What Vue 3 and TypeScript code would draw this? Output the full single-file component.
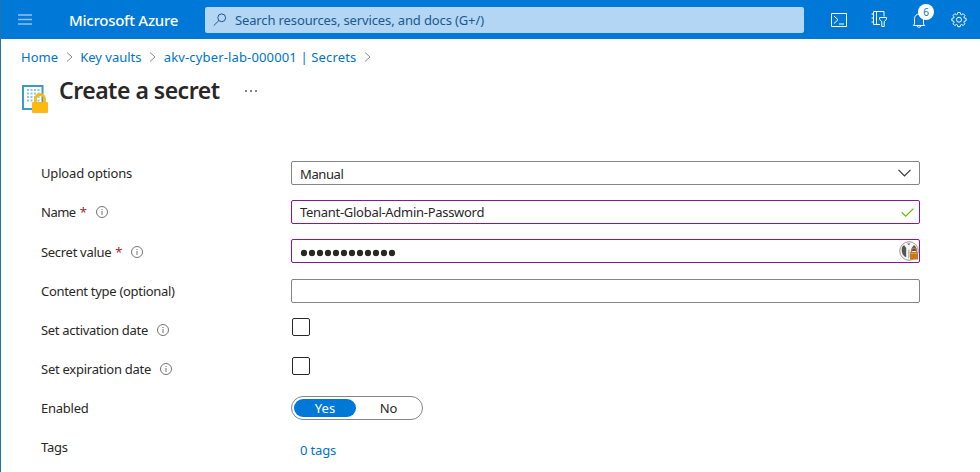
<script setup lang="ts">
import { ref } from 'vue'

interface Row {
  id: string
  label: string
  kind: 'select' | 'text' | 'password' | 'empty' | 'check' | 'toggle' | 'tags'
  required?: boolean
  info?: boolean
}

const crumbs = ['Home', 'Key vaults', 'akv-cyber-lab-000001 | Secrets']
const rows: Row[] = [
  { id: 'upload', label: 'Upload options', kind: 'select' },
  { id: 'name', label: 'Name', kind: 'text', required: true, info: true },
  { id: 'value', label: 'Secret value', kind: 'password', required: true, info: true },
  { id: 'content', label: 'Content type (optional)', kind: 'empty' },
  { id: 'activation', label: 'Set activation date', kind: 'check', info: true },
  { id: 'expiration', label: 'Set expiration date', kind: 'check', info: true },
  { id: 'enabled', label: 'Enabled', kind: 'toggle' },
  { id: 'tags', label: 'Tags', kind: 'tags' },
]
const enabled = ref(true)
const dots = Array.from({ length: 12 }, (_, i) => i * 8 + 4)
const gridDots = [0, 1, 2, 3].flatMap((r) => [0, 1, 2, 3].map((c) => ({ x: 5 + c * 3.5, y: 5 + r * 3.5 })))
</script>

<template>
  <div class="portal">
    <header class="topbar">
      <svg class="menu" width="14" height="11" viewBox="0 0 14 11"><path d="M0 1h14M0 5.5h14M0 10h14" /></svg>
      <span class="brand">Microsoft Azure</span>
      <div class="search">
        <svg width="14" height="14" viewBox="0 0 14 14"><circle cx="8.7" cy="4.8" r="3.9" /><path d="M5.8 7.7L.8 12.5" /></svg>
        <span class="search-text">Search resources, services, and docs (G+/)</span>
      </div>
      <nav class="tools">
        <svg width="16" height="14" viewBox="0 0 16 14"><path d="M.5.5h15v13H.5zM3 3l4 3.7L3 10.5M8 11h5" /></svg>
        <svg class="filter" width="16" height="17" viewBox="0 0 16 17"><path d="M9 13.5H2.5v-13h10.5v5M5.5.5v13M.5 3h2M.5 7h2M.5 11h2M8.5 6.5h7v1.7l-2.3 2.6v4.7h-2.4v-4.7L8.5 8.2z" /></svg>
        <span class="bell">
          <svg width="14" height="16" viewBox="0 0 14 16"><path d="M2.5 12V6.5a4.5 4.5 0 0 1 9 0V12l1.2 1.5H1.3zM5 13.8c.3 2 3.7 2 4 0" /></svg>
          <b class="count">6</b>
        </span>
        <svg class="gear" width="16" height="16" viewBox="0 0 16 16">
          <path d="M6.8.5h2.4l.4 1.8 1 .4 1.6-1 1.7 1.7-1 1.6.4 1 1.8.4v2.4l-1.8.4-.4 1 1 1.6-1.7 1.7-1.6-1-1 .4-.4 1.8H6.8l-.4-1.8-1-.4-1.6 1-1.7-1.7 1-1.6-.4-1L.9 8.8V6.4L2.7 6l.4-1-1-1.6 1.7-1.7 1.6 1 1-.4z" /><circle cx="8" cy="7.7" r="2.5" />
        </svg>
      </nav>
    </header>

    <main class="blade">
      <nav class="crumbs">
        <template v-for="(crumb, i) in crumbs" :key="crumb">
          <a :class="'crumb crumb-' + i">{{ crumb }}</a>
          <svg class="sep" width="7" height="10" viewBox="0 0 7 10"><path d="M1 .5L6 5 1 9.5" /></svg>
        </template>
      </nav>

      <div class="heading">
        <svg width="28" height="29" viewBox="0 0 28 29">
          <path class="sheet" d="M1 2h19.5v23H1z" />
          <rect v-for="(d, i) in gridDots" :key="i" class="cell" :x="d.x" :y="d.y" width="2" height="2" />
          <path class="shackle" d="M13.5 19v-4a4.5 4.5 0 0 1 9 0v4" />
          <rect class="lock" x="10" y="18" width="16" height="11" rx="1" />
        </svg>
        <h1>Create a secret</h1>
        <span class="more"><i></i><i></i><i></i></span>
      </div>

      <form class="form" @submit.prevent>
        <div v-for="row in rows" :key="row.id" :class="['row', 'row-' + row.id]">
          <div class="label">
            <span class="label-text">{{ row.label }}</span>
            <span v-if="row.required" class="star">*</span>
            <svg v-if="row.info" class="info" width="12" height="12" viewBox="0 0 12 12"><circle cx="6" cy="6" r="5.5" /><path d="M6 5v4M6 3v1" /></svg>
          </div>

          <div v-if="row.kind === 'select'" class="field">
            <span class="manual">Manual</span>
            <svg class="chevron" width="13" height="8" viewBox="0 0 13 8"><path d="M.5.8l6 6 6-6" /></svg>
          </div>
          <div v-else-if="row.kind === 'text'" class="field valid">
            <span class="secret-name">Tenant-Global-Admin-Password</span>
            <svg class="tick" width="13" height="9" viewBox="0 0 13 9"><path d="M.7 4.2l4 3.9L12.4.6" /></svg>
          </div>
          <div v-else-if="row.kind === 'password'" class="field valid">
            <svg class="dots" width="96" height="8" viewBox="0 0 96 8"><ellipse v-for="x in dots" :key="x" :cx="x" cy="4" rx="3.1" ry="3.3" /></svg>
            <svg class="manager" width="20" height="20" viewBox="0 0 20 20">
              <circle class="ring" cx="10" cy="10" r="9.3" />
              <path class="dark" d="M3 6.2L5 4l2.2 3v9.3C4 15 2 12 3 6.2zM12.8 6.8L15 4C17.3 6 18 8 17.7 10h-4.9zM8.3 2.4h3L9.8 4.2z" />
              <path class="mid" d="M9 9.5l.8-1.5.8 1.5v6.5L9 18z" />
              <path class="clasp" d="M12.5 12V9.7a2.5 2.5 0 0 1 5 0V12" />
              <rect class="pad" x="11" y="11" width="8" height="7.5" rx=".6" />
              <path class="shine" d="M11.3 12.5h7.4" />
            </svg>
          </div>
          <div v-else-if="row.kind === 'empty'" class="field"></div>
          <span v-else-if="row.kind === 'check'" class="check"></span>
          <div v-else-if="row.kind === 'toggle'" class="toggle">
            <span :class="['option', { on: enabled }]" @click="enabled = true">Yes</span>
            <span :class="['option', { on: !enabled }]" @click="enabled = false">No</span>
          </div>
          <a v-else class="tags">0 tags</a>
        </div>
      </form>
    </main>
  </div>
</template>

<style>
body {
  background: #fff;
}
</style>

<style scoped>
* {
  box-sizing: border-box;
}
.portal {
  width: 980px;
  height: 472px;
  overflow: hidden;
  border-left: 1px solid #2273a8;
  background: #fff;
  color: #292827;
  font: 13px/18px 'Noto Sans', sans-serif;
  white-space: nowrap;
}
svg {
  display: block;
  flex: none;
  fill: none;
}
.topbar {
  display: flex;
  align-items: center;
  height: 39px;
  padding-left: 17px;
  background: #0078d7;
  color: #fff;
}
.menu {
  stroke: #8fc3ee;
  stroke-width: 1.3;
}
.brand {
  width: 136px;
  margin-left: 37px;
  font-size: 15px;
  font-weight: 500;
  letter-spacing: -0.25px;
}
.search {
  display: flex;
  align-items: center;
  width: 599px;
  height: 26px;
  padding-left: 8px;
  gap: 8px;
  border-radius: 2px;
  background: #b2d6f3;
  color: #1c598f;
}
.search-text {
  letter-spacing: -0.13px;
}
.search svg {
  stroke: #1c598f;
}
.tools {
  display: flex;
  align-items: center;
  margin-left: 27px;
  gap: 24px;
}
.tools svg {
  stroke: #fff;
}
.tools .gear {
  margin-left: 2px;
}
.bell {
  position: relative;
}
.bell svg {
  position: relative;
  left: 1px;
}
.count {
  position: absolute;
  top: -8px;
  left: 7px;
  width: 16px;
  height: 16px;
  border-radius: 8px;
  background: #fff;
  color: #0078d7;
  font-size: 10px;
  font-weight: 400;
  line-height: 16px;
  text-align: center;
}
.crumbs {
  display: flex;
  align-items: center;
  height: 18px;
  margin-top: 9px;
  padding-left: 20px;
  gap: 7.6px;
  color: #0073d0;
}
.crumb-2 {
  letter-spacing: 0.15px;
}
.sep {
  stroke: #8a8a8a;
}
.heading {
  display: flex;
  height: 50px;
  margin-top: 12px;
  padding: 6px 0 0 21px;
}
h1 {
  width: 186px;
  margin: -11px 0 0 9px;
  font-size: 23px;
  font-weight: 600;
  line-height: 34px;
  letter-spacing: -0.5px;
}
.more {
  display: flex;
  gap: 3px;
  padding-top: 6px;
}
.more i {
  width: 2px;
  height: 2px;
  background: #858585;
}
.form {
  padding: 33px 0 0 40px;
}
.row {
  display: flex;
  align-items: flex-start;
  height: 39px;
}
.row-value {
  height: 40px;
}
.label {
  display: flex;
  align-items: center;
  width: 250px;
  height: 24px;
}
.label-text {
  letter-spacing: -0.3px;
}
.row-upload .label-text {
  letter-spacing: -0.16px;
}
.row-name .label-text {
  letter-spacing: -0.5px;
}
.row-expiration .label-text,
.row-enabled .label-text,
.row-tags .label-text {
  letter-spacing: -0.25px;
}
.row-value .label {
  height: 26px;
}
.star {
  margin-left: 4px;
  color: #a4262c;
}
.info {
  margin-left: 9px;
  stroke: #737373;
}
.field {
  display: flex;
  align-items: center;
  justify-content: space-between;
  width: 629px;
  height: 24px;
  padding: 0 5px 0 8px;
  border: 1px solid #858585;
  border-radius: 2px;
}
.valid {
  border-color: #881798;
}
.manual {
  padding-top: 2px;
  letter-spacing: -0.4px;
}
.secret-name {
  letter-spacing: -0.29px;
}
.chevron {
  margin-right: 3px;
  stroke: #333;
  stroke-width: 1.2;
}
.tick {
  stroke: #6bb700;
  stroke-width: 1.2;
}
.dots {
  margin-top: 4px;
  fill: #292827;
}
.manager {
  margin-right: -5px;
}
.ring {
  fill: #f5f5f5;
  stroke: #999;
}
.dark {
  fill: #555;
}
.mid {
  fill: #bbb;
}
.clasp {
  stroke: #b87a30;
  stroke-width: 1.3;
}
.pad {
  fill: #c87818;
}
.shine {
  stroke: #e79b3c;
}
.check {
  width: 18px;
  height: 18px;
  margin: 0 0 0 1px;
  border: 1px solid #292827;
  border-radius: 2px;
}
.toggle {
  display: flex;
  width: 132px;
  height: 24px;
  padding: 2px;
  border: 1px solid #858585;
  border-radius: 12px;
}
.option {
  flex: none;
  width: 65px;
  border-radius: 9px;
  line-height: 18px;
  text-align: center;
}
.option.on {
  width: 62px;
  background: #0078d7;
  color: #fff;
}
.tags {
  padding: 6px 0 0 9px;
  color: #0073d0;
  letter-spacing: -0.15px;
}
.sheet {
  fill: #fff;
  stroke: #3a9cc6;
  stroke-width: 2;
}
.cell {
  fill: #8cc9e4;
}
.shackle {
  stroke: #fdb913;
  stroke-width: 2.8;
}
.lock {
  fill: #fdb913;
}
</style>
